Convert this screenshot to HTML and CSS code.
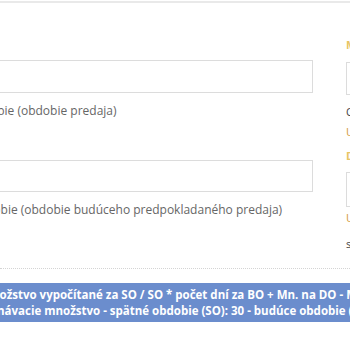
FILE: index.html
```html
<!DOCTYPE html>
<html lang="sk">
  <head>
    <meta charset="UTF-8" />
    <title>Objednávacie množstvo</title>
    <link rel="stylesheet" href="styles.css">
  </head>
  <body>
    <div class="panel">
      <div class="form-row">
        <div class="col col-main">
          <div class="group group-first">
            <input class="field" type="text">
            <div class="help">Spätné obdobie (obdobie predaja)</div>
          </div>
          <div class="group group-second">
            <input class="field" type="text">
            <div class="help">Budúce obdobie (obdobie budúceho predpokladaného predaja)</div>
          </div>
        </div>

        <div class="col col-side">
          <div class="side-label">Minimálne množstvo</div>
          <input class="field" type="text">
          <div class="side-help">Odporúčané</div>
          <div class="side-warn">Upozornenie</div>
          <div class="side-label side-label-second">Dodacia lehota</div>
          <input class="field field-side" type="text">
          <div class="side-warn">Upozornenie</div>
          <div class="side-help">s</div>
        </div>
      </div>

      <div class="divider"></div>

      <div class="note">
        <div class="note-line line-one">Mn. množstvo vypočítané za SO / SO * počet dní za BO + Mn. na DO - Mn. na sklade</div>
        <div class="note-line line-two">Objednávacie množstvo - spätné obdobie (SO): 30 - budúce obdobie (BO): 30</div>
      </div>
    </div>
  </body>
</html>
```

FILE: styles.css
```css
body {
  margin: 0;
  background: #fff;
  font-family: "Open Sans", "Noto Sans", sans-serif;
  color: #666;
  overflow: hidden;
}

.panel {
  width: 350px;
  overflow: hidden;
  border-top: 2px solid #e9e9e9;
  margin-top: 1px;
}

.form-row {
  display: flex;
  gap: 33px;
  margin-left: -74px;
}

.col {
  flex: none;
}

.col-main {
  width: 387px;
}

.col-side {
  width: 200px;
  padding-top: 33px;
}

.field {
  display: block;
  box-sizing: border-box;
  width: 100%;
  height: 33px;
  margin: 0;
  border: 1px solid #dcdcdc;
  background: #fff;
}

.group-first {
  padding-top: 57px;
}

.group-second {
  padding-top: 40px;
}

.group-second .field {
  height: 32px;
}

.help {
  margin-top: 9px;
  font-size: 12px;
  line-height: 18px;
  color: #666;
  white-space: nowrap;
}

.side-label {
  font-size: 11px;
  line-height: 18px;
  font-weight: bold;
  color: #e8c565;
  margin-bottom: 8px;
}

.side-label-second {
  margin-top: 6px;
  margin-bottom: 7px;
}

.field-side {
  height: 35px;
}

.side-help {
  font-size: 11px;
  line-height: 18px;
  color: #444;
  margin-top: 8px;
}

.side-warn {
  font-size: 11px;
  line-height: 18px;
  color: #d39a3a;
  margin-top: 2px;
}

.divider {
  margin-top: 15px;
  border-top: 1px dotted #d4d4d4;
}

.note {
  margin-top: 14px;
  background: #6b8dcd;
  color: #fff;
  font-weight: bold;
  font-size: 11.5px;
  line-height: 16px;
  padding: 4px 0 3px;
}

.note-line {
  white-space: nowrap;
}

.line-one {
  margin-left: -44px;
}

.line-two {
  margin-left: -37px;
}
```
